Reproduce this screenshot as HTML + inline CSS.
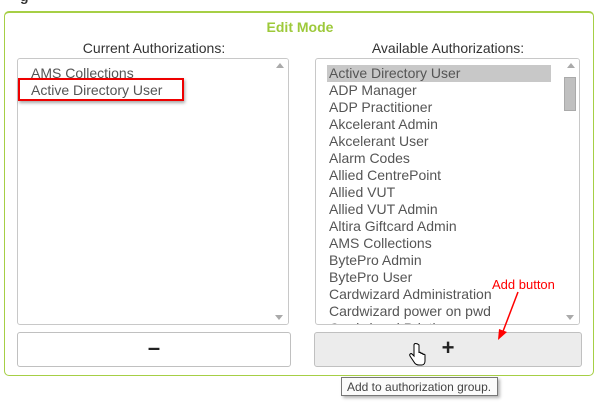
<!DOCTYPE html><html><head><style>
body{margin:0;width:600px;height:402px;background:#fff;font-family:"Liberation Sans",Arial,sans-serif;position:relative;overflow:hidden}
.a{position:absolute}
.panel{left:4px;top:11px;width:588px;height:362px;border:1px solid #a6cf45;border-radius:5px;border-top:2px solid #a6cf45}
.lb{border:1px solid #c8c8c8;border-radius:3px;background:#fff;overflow:hidden}
.it{font-size:14px;color:#555;height:17px;line-height:17px;padding-left:13px;white-space:nowrap}
.sb{position:absolute;right:0;top:0;width:17px;height:100%;background:#fff}
.btn{border:1px solid #c0c0c0;border-radius:3px;background:#ececec;font-weight:bold;font-size:22px;color:#222;text-align:center;line-height:30px}
.lbl{font-size:14px;color:#333;text-align:center}
</style></head><body>
<div class="a" style="left:20px;top:-12px;width:120px;height:14px;font-size:14px;font-weight:bold;color:#333">g</div>
<div class="a panel"></div>
<div class="a" style="left:0;width:600px;top:19px;text-align:center;color:#9dc93a;font-weight:bold;font-size:14px">Edit Mode</div>
<div class="a lbl" style="left:17px;width:274px;top:40px">Current Authorizations:</div>
<div class="a lbl" style="left:315px;width:266px;top:40px">Available Authorizations:</div>
<div class="a lb" style="left:17px;top:58px;width:272px;height:267px;padding-top:6px;box-sizing:border-box">
<div class="it">AMS Collections</div><div class="it">Active Directory User</div>
<div class="sb"><div style="margin:4px auto 0;width:0;border:4px solid transparent;border-bottom:5px solid #aaa;border-top:0"></div><div style="position:absolute;bottom:4px;left:4px;width:0;border:4px solid transparent;border-top:5px solid #aaa;border-bottom:0"></div></div>
</div>
<div class="a" style="left:18px;top:78px;width:166px;height:23px;border:2px solid #e00;box-sizing:border-box;box-shadow:1px 2px 3px rgba(0,0,0,.35)"></div>
<div class="a lb" style="left:315px;top:58px;width:265px;height:267px;padding-top:6px;box-sizing:border-box">
<div class="it" style="background:#c8c8c8;margin-left:11px;padding-left:2px;width:222px">Active Directory User</div>
<div class="it">ADP Manager</div><div class="it">ADP Practitioner</div><div class="it">Akcelerant Admin</div><div class="it">Akcelerant User</div><div class="it">Alarm Codes</div><div class="it">Allied CentrePoint</div><div class="it">Allied VUT</div><div class="it">Allied VUT Admin</div><div class="it">Altira Giftcard Admin</div><div class="it">AMS Collections</div><div class="it">BytePro Admin</div><div class="it">BytePro User</div><div class="it">Cardwizard Administration</div><div class="it">Cardwizard power on pwd</div><div class="it">Cardwizard Printing</div>
<div class="sb"><div style="margin:4px auto 0;width:0;border:4px solid transparent;border-bottom:5px solid #aaa;border-top:0"></div><div style="position:absolute;top:18px;left:2px;width:12px;height:34px;background:#c0c0c0;border:1px solid #aaa;box-sizing:border-box"></div><div style="position:absolute;bottom:4px;left:4px;width:0;border:4px solid transparent;border-top:5px solid #aaa;border-bottom:0"></div></div>
</div>
<div class="a btn" style="left:17px;top:332px;width:272px;height:33px;background:#fff">&#8211;</div>
<div class="a btn" style="left:314px;top:332px;width:266px;height:33px">+</div>
<div class="a" style="left:492px;top:277px;color:#f00;font-size:13px">Add button</div>
<svg class="a" style="left:490px;top:290px" width="40" height="60"><line x1="28" y1="2" x2="12" y2="44" stroke="#f00" stroke-width="1.5"/><polygon points="8,50 9,39 17,42" fill="#f00"/></svg>
<svg class="a" style="left:408px;top:343px" width="20" height="24"><path d="M6 2v11l-2-2c-1-1-3 0-2 2l4 6c1 2 3 3 5 3h3c2 0 3-2 3-4v-6c0-1-2-1-2 0v-1c0-1-2-1-2 0v-1c0-1-2-1-2 0V2C9 0 6 0 6 2z" fill="#fff" stroke="#000" stroke-width="1"/></svg>
<div class="a" style="left:341px;top:377px;width:157px;height:19px;border:1px solid #777;background:#fbfbfb;font-size:12px;color:#444;line-height:19px;box-sizing:border-box;padding-left:5px;box-shadow:2px 2px 3px rgba(0,0,0,.3)">Add to authorization group.</div>
</body></html>
